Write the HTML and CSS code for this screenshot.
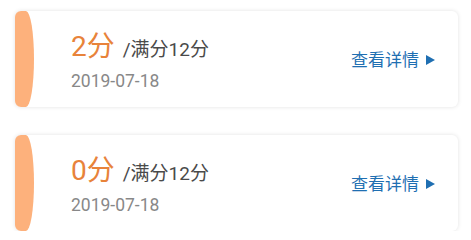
FILE: index.html
```html
<!DOCTYPE html>
<html lang="zh">
<head>
<meta charset="utf-8">
<link rel="stylesheet" href="styles.css">
</head>
<body>
<div class="list">
  <div class="card">
    <div class="bar"></div>
    <div class="info">
      <div class="score"><span class="got">2分</span><span class="full">/满分12分</span></div>
      <div class="date">2019-07-18</div>
    </div>
    <div class="more">查看详情<span class="tri"></span></div>
  </div>
  <div class="card">
    <div class="bar"></div>
    <div class="info">
      <div class="score"><span class="got">0分</span><span class="full">/满分12分</span></div>
      <div class="date">2019-07-18</div>
    </div>
    <div class="more">查看详情<span class="tri"></span></div>
  </div>
</div>
</body>
</html>
```
FILE: styles.css
```css
html, body {
  margin: 0;
  background: #fff;
  font-family: Roboto, "Noto Sans CJK SC", sans-serif;
}
.list {
  display: flex;
  flex-direction: column;
  gap: 28px;
  padding: 11px 13px 0 15px;
}
.card {
  height: 96px;
  display: flex;
  align-items: center;
  background: #fff;
  border-radius: 6px;
  box-shadow: 0 0 4px rgba(0, 0, 0, 0.12);
}
.bar {
  align-self: stretch;
  width: 19px;
  background: #fdb17c;
  border-radius: 6px 8px 8px 6px / 6px 48px 48px 6px;
}
.info {
  flex: 1;
  padding-left: 37px;
  padding-top: 4px;
}
.score {
  line-height: 32px;
  white-space: nowrap;
}
.got {
  font-size: 28px;
  color: #e8833a;
}
.full {
  font-size: 19px;
  color: #4a4a4a;
  margin-left: 8px;
}
.date {
  font-size: 17.5px;
  line-height: 20px;
  color: #888;
  margin-top: 4px;
}
.more {
  display: flex;
  align-items: center;
  font-size: 17px;
  line-height: 22px;
  color: #1f6fb2;
  margin-right: 23px;
  margin-top: 2px;
}
.tri {
  width: 0;
  height: 0;
  border-left: 9px solid #1f6fb2;
  border-top: 5px solid transparent;
  border-bottom: 5px solid transparent;
  margin-left: 7px;
}
```
